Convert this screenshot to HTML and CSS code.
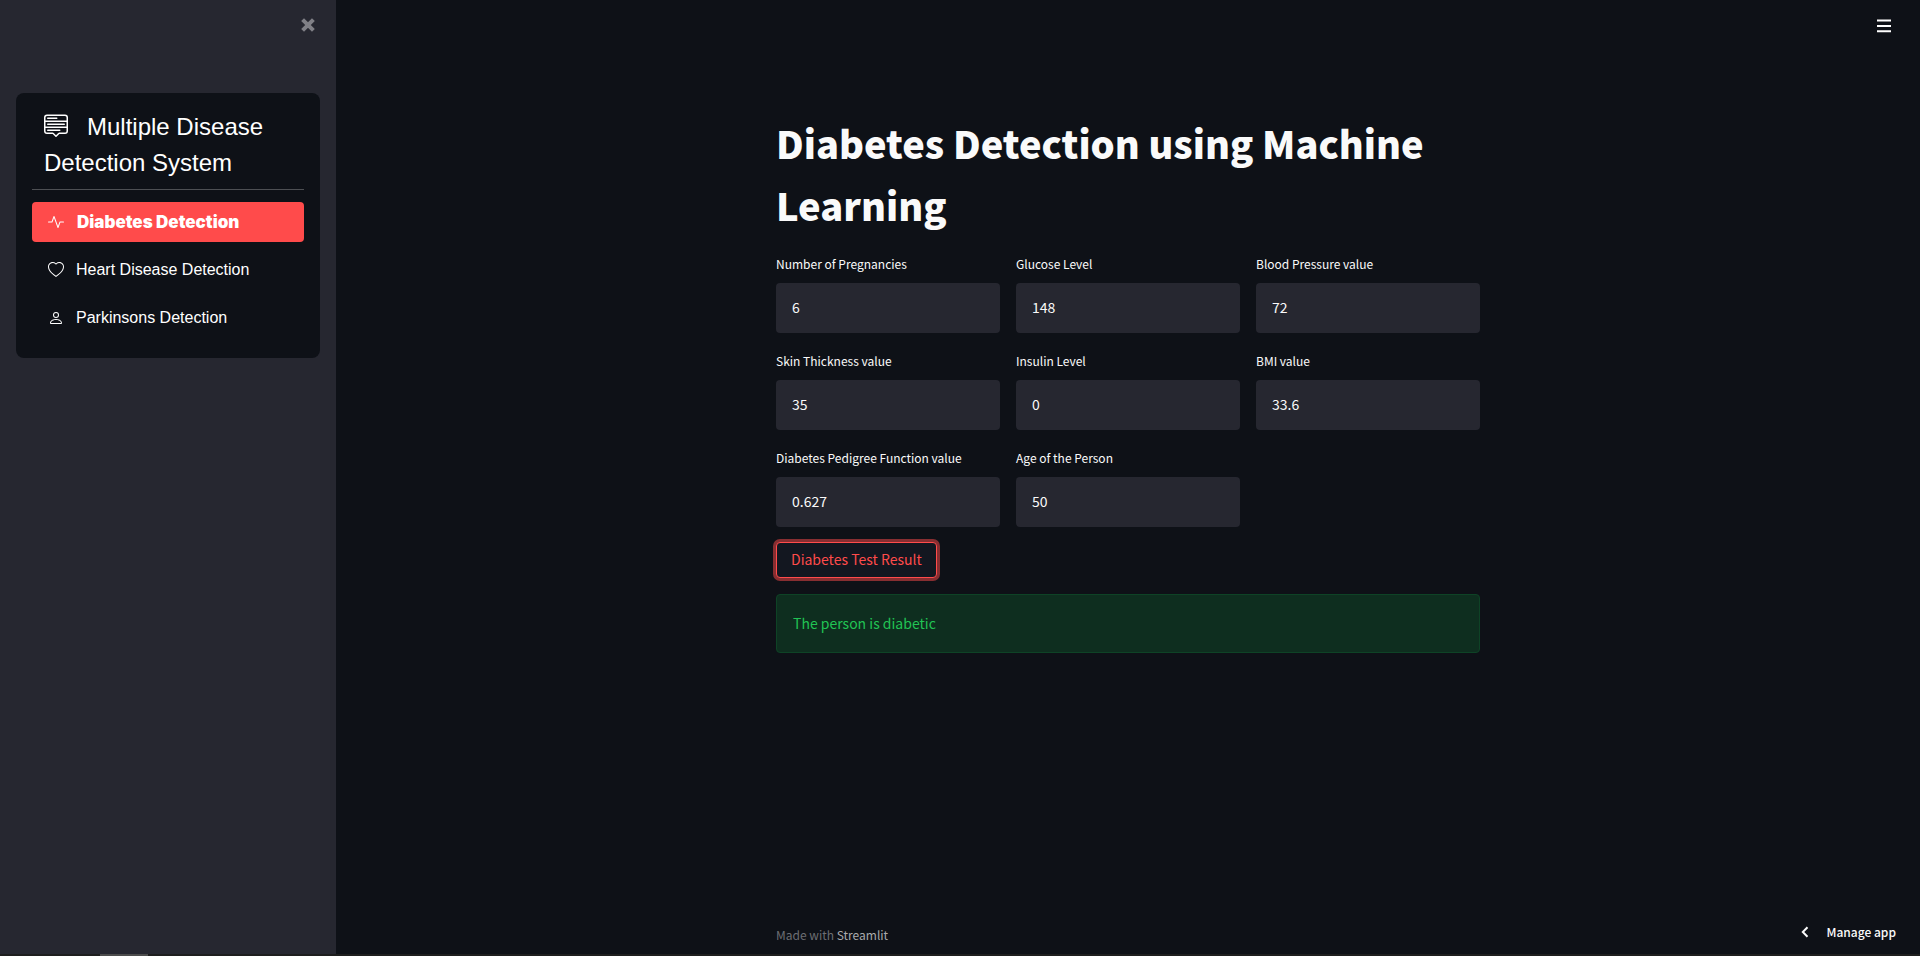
FILE: index.html
```html
<!DOCTYPE html>
<html lang="en">
<head>
<meta charset="utf-8">
<title>Multiple Disease Detection System</title>
<meta name="viewport" content="width=device-width, initial-scale=1">
<link rel="stylesheet" href="styles.css">
</head>
<body>
<div class="app">
  <aside class="sidebar">
    <div class="sidebar-top">
      <button class="icon-button close" type="button" aria-label="Close sidebar">
        <svg width="16" height="16" viewBox="0 0 16 16"><path d="M2.600 2.600L13.400 13.400M13.400 2.600L2.600 13.400" fill="none" stroke="currentColor" stroke-width="4"/></svg>
      </button>
    </div>
    <nav class="menu">
      <h2 class="menu-title"><svg class="menu-icon" width="24" height="24" viewBox="0 0 16 16" fill="currentColor"><path d="M7.646 15.854a.5.5 0 0 0 .708 0L10.207 14H14a2 2 0 0 0 2-2V3a2 2 0 0 0-2-2H2a2 2 0 0 0-2 2v9a2 2 0 0 0 2 2h3.793l1.853 1.854zM1 9V6h14v3H1zm14 1v2a1 1 0 0 1-1 1h-3.793a1 1 0 0 0-.707.293l-1.500 1.500-1.500-1.500A1 1 0 0 0 5.793 13H2a1 1 0 0 1-1-1v-2h14zm0-5H1V3a1 1 0 0 1 1-1h12a1 1 0 0 1 1 1v2zM2 11.500a.5.5 0 0 0 .5.5h8a.5.5 0 0 0 0-1h-8a.5.5 0 0 0-.5.5zm0-4a.5.5 0 0 0 .5.5h11a.5.5 0 0 0 0-1h-11a.5.5 0 0 0-.5.5zm0-4a.5.5 0 0 0 .5.5h6a.5.5 0 0 0 0-1h-6a.5.5 0 0 0-.5.5z"/></svg>Multiple Disease Detection System</h2>
      <ul class="menu-list">
        <li><a class="menu-link active" href="#diabetes"><svg width="16" height="16" viewBox="0 0 16 16" fill="currentColor"><path fill-rule="evenodd" d="M6 2a.5.5 0 0 1 .47.33L10 12.036l1.530-4.208A.5.5 0 0 1 12 7.500h3.500a.5.5 0 0 1 0 1h-3.150l-1.880 5.170a.5.5 0 0 1-.94 0L6 3.964 4.470 8.171A.5.5 0 0 1 4 8.500H.5a.5.5 0 0 1 0-1h3.150l1.880-5.170A.5.5 0 0 1 6 2Z"/></svg>Diabetes Detection</a></li>
        <li><a class="menu-link" href="#heart"><svg width="16" height="16" viewBox="0 0 16 16" fill="currentColor"><path d="m8 2.748-.717-.737C5.600.281 2.514.878 1.400 3.053c-.523 1.023-.641 2.500.314 4.385.920 1.815 2.834 3.989 6.286 6.357 3.452-2.368 5.365-4.542 6.286-6.357.955-1.886.838-3.362.314-4.385C13.486.878 10.400.280 8.717 2.010L8 2.748zM8 15C-7.333 4.868 3.279-3.040 7.824 1.143c.06.055.119.112.176.171a3.120 3.120 0 0 1 .176-.17C12.720-3.042 23.333 4.867 8 15z"/></svg>Heart Disease Detection</a></li>
        <li><a class="menu-link" href="#parkinsons"><svg width="16" height="16" viewBox="0 0 16 16" fill="currentColor"><path d="M8 8a3 3 0 1 0 0-6 3 3 0 0 0 0 6zm2-3a2 2 0 1 1-4 0 2 2 0 0 1 4 0zm4 8c0 1-1 1-1 1H3s-1 0-1-1 1-4 6-4 6 3 6 4zm-1-.004c-.001-.246-.154-.986-.832-1.664C11.516 10.680 10.289 10 8 10c-2.290 0-3.516.680-4.168 1.332-.678.678-.830 1.418-.832 1.664h10z"/></svg>Parkinsons Detection</a></li>
      </ul>
    </nav>
  </aside>
  <main class="main">
    <header class="toolbar">
      <button class="icon-button" type="button" aria-label="Main menu">
        <svg width="16" height="16" viewBox="0 0 16 16"><path d="M1 2.500h14M1 8h14M1 13.200h14" stroke="#fff" stroke-width="1.900"/></svg>
      </button>
    </header>
    <form class="content" onsubmit="return false">
      <h1>Diabetes Detection using Machine Learning</h1>
      <div class="fields">
        <div class="field"><label for="preg">Number of Pregnancies</label><input id="preg" type="text" value="6"></div>
        <div class="field"><label for="glucose">Glucose Level</label><input id="glucose" type="text" value="148"></div>
        <div class="field"><label for="bp">Blood Pressure value</label><input id="bp" type="text" value="72"></div>
        <div class="field"><label for="skin">Skin Thickness value</label><input id="skin" type="text" value="35"></div>
        <div class="field"><label for="insulin">Insulin Level</label><input id="insulin" type="text" value="0"></div>
        <div class="field"><label for="bmi">BMI value</label><input id="bmi" type="text" value="33.6"></div>
        <div class="field"><label for="dpf">Diabetes Pedigree Function value</label><input id="dpf" type="text" value="0.627"></div>
        <div class="field"><label for="age">Age of the Person</label><input id="age" type="text" value="50"></div>
      </div>
      <button class="submit" type="submit">Diabetes Test Result</button>
      <p class="alert" role="status">The person is diabetic</p>
    </form>
    <footer class="footer">Made with <a href="#streamlit">Streamlit</a></footer>
    <button class="manage" type="button"><svg width="8" height="12" viewBox="0 0 8 12"><path d="M6.500 1.200L1.800 6l4.700 4.800" fill="none" stroke="currentColor" stroke-width="2"/></svg>Manage app</button>
  </main>
</div>
<div class="scroll-track"><div class="scroll-thumb"></div></div>
</body>
</html>
```
FILE: styles.css
```css
* {
  box-sizing: border-box;
}

body {
  margin: 0;
  min-height: 100vh;
  display: flex;
  flex-direction: column;
  background: #0e1117;
  color: #fafafa;
  font-family: "Noto Sans CJK SC", "Noto Sans", sans-serif;
  font-size: 14px;
}

button,
input {
  font: inherit;
  color: inherit;
}

.app {
  flex: 1;
  display: flex;
}

.sidebar {
  flex: none;
  width: 336px;
  padding: 0 16px;
  background: #262730;
}

.sidebar-top {
  display: flex;
  justify-content: flex-end;
  height: 93px;
  padding-top: 17px;
  padding-right: 4px;
}

.icon-button {
  display: flex;
  width: 16px;
  height: 16px;
  padding: 0;
  border: 0;
  background: none;
  cursor: pointer;
}

.close {
  color: #808086;
}

.menu {
  padding: 16px 16px 20px;
  border-radius: 8px;
  background: #0e1117;
  color: #fff;
  font-family: "Liberation Sans", Arial, sans-serif;
  font-size: 16px;
}

.menu-title {
  margin: 0 0 12px;
  padding: 0 12px 8px;
  border-bottom: 1px solid #4d4f53;
  font-size: 24px;
  font-weight: 400;
  line-height: 36px;
}

.menu-icon {
  margin-right: 19px;
  vertical-align: -2px;
}

.menu-list {
  display: flex;
  flex-direction: column;
  gap: 8px;
  margin: 0;
  padding: 0;
  list-style: none;
}

.menu-link {
  display: flex;
  align-items: center;
  gap: 12px;
  height: 40px;
  padding: 0 16px;
  border-radius: 4px;
  color: inherit;
  text-decoration: none;
}

.menu-link.active {
  gap: 13px;
  background: #ff4b4b;
  font-family: Inter, "Liberation Sans", sans-serif;
  font-size: 17px;
  font-weight: 900;
}

.main {
  flex: 1;
  display: flex;
  flex-direction: column;
  position: relative;
}

.toolbar {
  display: flex;
  justify-content: flex-end;
  padding: 18px 28px;
}

.content {
  flex: 1;
  width: 100%;
  max-width: 736px;
  margin: 0 auto;
  padding: 60px 16px 0;
}

h1 {
  margin: 0 0 18px;
  font-size: 38px;
  font-weight: 900;
  line-height: 62px;
}

.fields {
  display: grid;
  grid-template-columns: repeat(3, minmax(0, 1fr));
  gap: 18px 16px;
}

.field {
  display: flex;
  flex-direction: column;
  gap: 9px;
}

.field label {
  font-size: 12px;
  line-height: 20px;
  white-space: nowrap;
}

.field input {
  width: 100%;
  height: 50px;
  padding: 0 16px 2px;
  border: 0;
  border-radius: 4px;
  background: #262730;
}

.submit {
  display: block;
  height: 36px;
  margin: 15px 0 16px;
  padding: 0 14px 2px;
  border: 1px solid #ff4b4b;
  border-radius: 4px;
  background: #131720;
  box-shadow: 0 0 0 3px rgba(255, 75, 75, 0.5);
  color: #ff4b4b;
  line-height: 24px;
}

.alert {
  margin: 0;
  padding: 16px 16px 17px;
  border: 1px solid #0e4326;
  border-radius: 4px;
  background: #0e2e1f;
  color: #21c354;
  line-height: 24px;
}

.footer {
  width: 100%;
  max-width: 736px;
  margin: 0 auto;
  padding: 0 16px 9px;
  color: #6c6e73;
  font-size: 12px;
  line-height: 20px;
}

.footer a {
  color: #a9aaad;
  text-decoration: none;
}

.manage {
  position: absolute;
  right: 24px;
  bottom: 10px;
  display: flex;
  align-items: center;
  gap: 18px;
  padding: 0;
  border: 0;
  background: none;
  font-size: 12px;
  font-weight: 500;
  line-height: 24px;
  cursor: pointer;
}

.scroll-track {
  height: 2px;
  background: #1e1e1e;
}

.scroll-thumb {
  width: 48px;
  height: 2px;
  margin-left: 100px;
  background: #4c4c4c;
}
```
